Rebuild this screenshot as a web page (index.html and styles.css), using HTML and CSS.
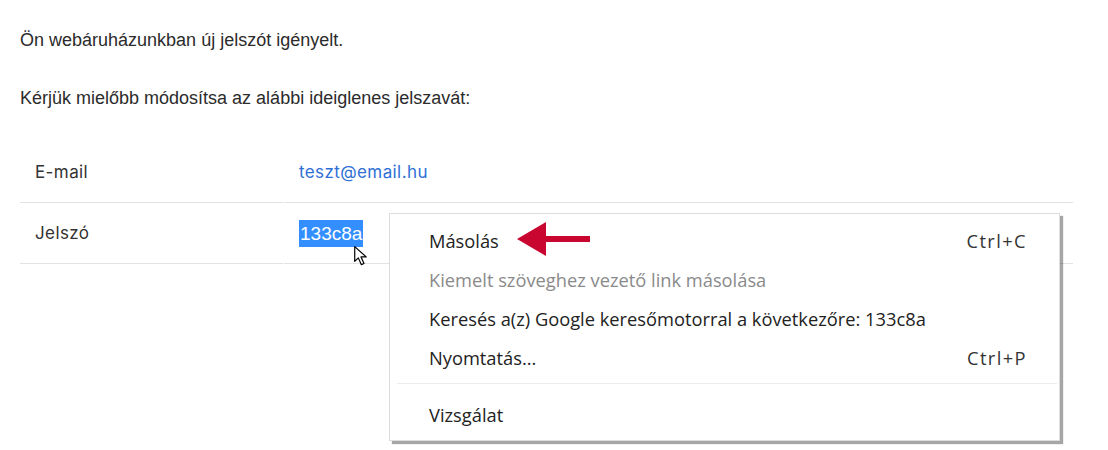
FILE: index.html
```html
<!DOCTYPE html>
<html lang="hu">
<head>
<meta charset="utf-8">
<link rel="stylesheet" href="styles.css">
</head>
<body>
<div class="page">
  <p class="intro">Ön webáruházunkban új jelszót igényelt.</p>
  <p class="intro second">Kérjük mielőbb módosítsa az alábbi ideiglenes jelszavát:</p>
  <table class="creds">
    <tr>
      <td class="label">E-mail</td>
      <td class="value"><span class="link">teszt@email.hu</span></td>
    </tr>
    <tr>
      <td class="label">Jelszó</td>
      <td class="value"><span class="selected">133c8a</span></td>
    </tr>
  </table>
</div>

<svg class="cursor" width="22" height="24" viewBox="0 0 20 22">
  <path d="M1.5 1.5 L1.5 15 L4.8 11.8 L7.6 18 L10 17 L7.3 10.9 L12 10.9 Z" fill="#fff" stroke="#000" stroke-width="1.1" stroke-linejoin="round"/>
</svg>

<div class="menu">
  <div class="item"><span>Másolás</span><span class="key">Ctrl+C</span></div>
  <div class="item disabled"><span>Kiemelt szöveghez vezető link másolása</span></div>
  <div class="item"><span>Keresés a(z) Google keresőmotorral a következőre: 133c8a</span></div>
  <div class="item"><span>Nyomtatás...</span><span class="key">Ctrl+P</span></div>
  <div class="sep"></div>
  <div class="item"><span>Vizsgálat</span></div>
</div>

<svg class="arrow" width="80" height="36" viewBox="0 0 80 36">
  <polygon points="2,18 31,1 31,15 75,15 75,21 31,21 31,35" fill="#c8062f"/>
</svg>
</body>
</html>
```

FILE: styles.css
```css
html, body {
  margin: 0;
  padding: 0;
  background: #fff;
}

.page {
  padding: 29px 33px 0 20px;
}

.intro {
  margin: 0;
  font-family: "Liberation Sans", Arial, sans-serif;
  font-size: 18px;
  line-height: 22px;
  color: #2b2b2b;
}

.intro.second {
  margin-top: 36px;
}

.creds {
  margin-top: 33px;
  width: 1055px;
  border-collapse: separate;
  border-spacing: 1px 0;
  margin-left: -1px;
  font-family: "Inter", "Noto Sans", sans-serif;
  font-size: 17px;
  letter-spacing: 0.4px;
  color: #333;
}

.creds td {
  border-bottom: 1px solid #e2e2e2;
  height: 60px;
  padding: 0 15px;
  vertical-align: middle;
}

.creds td.label {
  width: 233px;
}

.link {
  color: #2f6fd6;
}

.selected {
  display: inline-block;
  background: #338fff;
  color: #fff;
  font-family: "Liberation Sans", Arial, sans-serif;
  font-size: 19px;
  letter-spacing: 0;
  line-height: 27px;
  padding: 0 1px;
}

.cursor {
  position: absolute;
  left: 353px;
  top: 245px;
}

.menu {
  position: absolute;
  left: 389px;
  top: 213px;
  width: 671px;
  box-sizing: border-box;
  padding: 7px 0 6px 0;
  background: #fff;
  border: 1px solid #dcdcdc;
  box-shadow: 3px 3px 1px rgba(0, 0, 0, 0.35);
  font-family: "Open Sans", "Noto Sans", sans-serif;
  font-size: 18.3px;
  color: #222;
}

.item {
  display: flex;
  justify-content: space-between;
  align-items: center;
  height: 39px;
  padding: 0 32px 0 39px;
}

.item.disabled {
  color: #8a8a8a;
}

.key {
  color: #333;
  letter-spacing: 1.4px;
}

.sep {
  height: 1px;
  background: #ececec;
  margin: 6px 2px 11px 7px;
}

.arrow {
  position: absolute;
  left: 515px;
  top: 221px;
}
```
